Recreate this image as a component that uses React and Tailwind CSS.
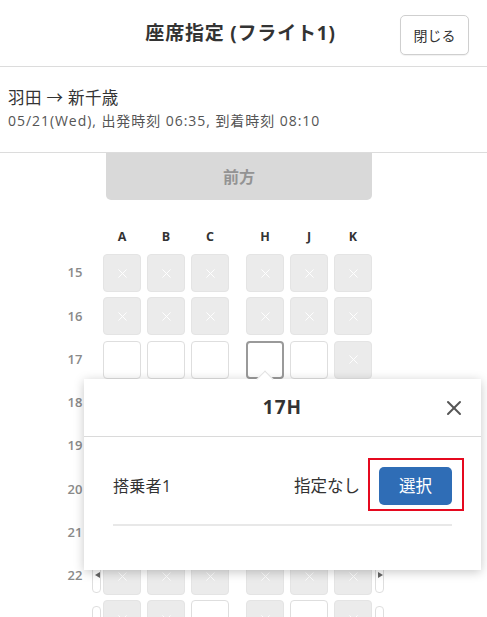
import React from 'react';
import { X } from 'lucide-react';

const COLS_L = ['A', 'B', 'C'];
const COLS_R = ['H', 'J', 'K'];

// x = taken, o = free, s = selected
const ROWS = [
  { no: 15, seats: 'xxxxxx' },
  { no: 16, seats: 'xxxxxx' },
  { no: 17, seats: 'ooosox' },
  { no: 18, seats: 'xxxxxx' },
  { no: 19, seats: 'xxxxxx' },
  { no: 20, seats: 'xxxxxx' },
  { no: 21, seats: 'xxxxxx' },
  { no: 22, seats: 'xxxxxx', exit: true, arrows: true },
  { no: '', seats: 'xxoxox', exit: true },
];

const Seat = ({ kind }) => {
  if (kind === 'x') {
    return (
      <div className="w-[38px] h-[38px] rounded-[4px] bg-[#ebebeb] border border-[#e4e4e4] flex items-center justify-center">
        <X size={15} strokeWidth={1.5} className="text-white" />
      </div>
    );
  }
  if (kind === 's') {
    return <div className="w-[38px] h-[38px] rounded-[4px] bg-white border-2 border-[#9a9a9a]" />;
  }
  return <div className="w-[38px] h-[38px] rounded-[4px] bg-white border border-[#dedede]" />;
};

const ExitMark = ({ side, arrow }) => (
  <div className="relative w-[9px] h-[30px] rounded-[4px] border border-[#dedede] bg-white mt-[4px]">
    {arrow && (
      <span
        className={`absolute top-[8px] ${side === 'l' ? 'left-[2px] border-r-[5px] border-r-[#666]' : 'left-[2px] border-l-[5px] border-l-[#666]'} w-0 h-0 border-y-[3.5px] border-y-transparent`}
      />
    )}
  </div>
);

const SeatRow = ({ row }) => (
  <div className="flex items-center h-[38px]">
    <span className="w-[30px] text-center text-[13px] font-semibold text-[#8a8a8a]">{row.no}</span>
    <div className="w-[13px] flex justify-start pl-[2px]">
      {row.exit && <ExitMark side="l" arrow={row.arrows} />}
    </div>
    <div className="flex gap-[6px]">
      {row.seats.slice(0, 3).split('').map((k, i) => <Seat key={i} kind={k} />)}
    </div>
    <div className="w-[17px]" />
    <div className="flex gap-[6px]">
      {row.seats.slice(3).split('').map((k, i) => <Seat key={i} kind={k} />)}
    </div>
    <div className="ml-[3px]">
      {row.exit && <ExitMark side="r" arrow={row.arrows} />}
    </div>
  </div>
);

export default function App() {
  return (
    <div className="relative w-[487px] h-[617px] overflow-hidden bg-white text-[#333] font-['Open_Sans','Noto_Sans_CJK_JP',sans-serif]">
      <header className="h-[67px] border-b border-[#dcdcdc] flex items-center justify-center relative pr-[6px]">
        <h1 className="text-[19px] font-bold tracking-[0.8px]">座席指定 (フライト1)</h1>
        <button className="absolute right-[18px] top-[15px] w-[69px] h-[40px] border border-[#cfcfcf] rounded-[5px] text-[14px] text-[#333] bg-white shadow-[0_1px_1px_rgba(0,0,0,0.06)]">
          閉じる
        </button>
      </header>

      <section className="h-[86px] border-b border-[#dcdcdc] px-[8px] pt-[19px]">
        <p className="text-[16.5px] leading-[23px] text-[#333] tracking-[0.4px]">羽田 → 新千歳</p>
        <p className="text-[14px] leading-[23px] text-[#555] tracking-[0.95px]">05/21(Wed), 出発時刻 06:35, 到着時刻 08:10</p>
      </section>

      <div className="pl-[60px]">
        <div className="ml-[46px] w-[266px] h-[47px] bg-[#d9d9d9] rounded-b-[5px] flex items-center justify-center text-[16px] text-[#939393] font-semibold">
          前方
        </div>

        <div className="flex items-center h-[16px] mt-[29px] mb-[9px]">
          <div className="w-[43px]" />
          <div className="flex gap-[6px]">
            {COLS_L.map((c) => (
              <span key={c} className="w-[38px] text-center text-[12.5px] font-bold text-[#333]">{c}</span>
            ))}
          </div>
          <div className="w-[17px]" />
          <div className="flex gap-[6px]">
            {COLS_R.map((c) => (
              <span key={c} className="w-[38px] text-center text-[12.5px] font-bold text-[#333]">{c}</span>
            ))}
          </div>
        </div>

        <div className="flex flex-col gap-[5.3px]">
          {ROWS.map((r, i) => <SeatRow key={i} row={r} />)}
        </div>
      </div>

      {/* seat popover */}
      <div className="absolute left-[84px] top-[379px] w-[397px] h-[191px] bg-white shadow-[0_2px_10px_rgba(0,0,0,0.22)]">
        <div className="absolute left-[175px] -top-[6px] w-[12px] h-[12px] bg-white rotate-45 border-t border-l border-[#e2e2e2]" />
        <div className="relative h-[58px] border-b border-[#dadada] flex items-center justify-center">
          <span className="text-[19px] font-bold text-[#333] tracking-[1px]">17H</span>
          <button className="absolute right-[15px] top-[17px] text-[#555]">
            <X size={24} strokeWidth={2} />
          </button>
        </div>
        <div className="px-[29px]">
          <div className="relative h-[87px] pt-[30px]">
            <div className="flex items-center h-[38px]">
              <span className="text-[16px] text-[#333] tracking-[0.3px]">搭乗者1</span>
              <span className="ml-auto text-[16.5px] text-[#333]">指定なし</span>
              <button className="ml-[19px] w-[73px] h-[38px] rounded-[5px] bg-[#2f6db6] text-white text-[16.5px]">選択</button>
            </div>
            <div className="absolute right-[-12px] top-[21px] w-[96px] h-[53px] border-2 border-[#e5091f]" />
          </div>
          <div className="h-[2px] bg-[#e8e8e8]" />
        </div>
      </div>
    </div>
  );
}
